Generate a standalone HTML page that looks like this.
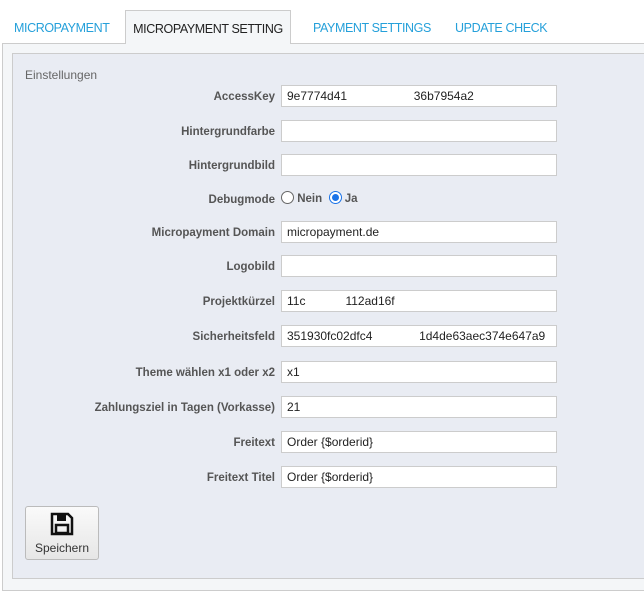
<!DOCTYPE html>
<html><head><style>
body{margin:0;width:644px;height:593px;background:#fff;font-family:"Liberation Sans",sans-serif;position:relative;overflow:hidden}
.tab{position:absolute;top:10px;height:33px;line-height:36px;font-size:12.5px;letter-spacing:-0.4px;color:#25a0da;white-space:nowrap}
.act{left:125px;width:166px;border:1px solid #ccc;border-bottom:none;background:#f4f6f8;color:#222;text-align:center;box-sizing:border-box;height:34px}
.outer{position:absolute;left:2px;top:43px;width:660px;height:546px;border:1px solid #ccc;background:#f4f6f8}
.inner{position:absolute;left:12px;top:53px;width:660px;height:524px;border:1px solid #ccc;background:#e9ecf3}
.ttl{position:absolute;left:25px;top:68px;font-size:12px;color:#666}
.lab{position:absolute;right:369px;font-size:11.5px;font-weight:bold;color:#555;text-align:right;white-space:nowrap}
.inp{position:absolute;left:281px;width:276px;height:22px;box-sizing:border-box;border:1px solid #ccc;background:#fff;font-size:12px;color:#222;line-height:20px;padding-left:5px;white-space:pre}
.btn{position:absolute;left:25px;top:506px;width:74px;height:54px;box-sizing:border-box;border:1px solid #bbb;border-radius:3px;background:linear-gradient(#fafafa,#e6e6e6);text-align:center;font-size:12px;color:#333}
</style></head><body>
<div class="outer"></div>
<div class="tab" style="left:14px">MICROPAYMENT</div>
<div class="tab act">MICROPAYMENT SETTING</div>
<div class="tab" style="left:313px">PAYMENT SETTINGS</div>
<div class="tab" style="left:455px">UPDATE CHECK</div>
<div class="inner"></div>
<div class="ttl">Einstellungen</div>

<div class="lab" style="top:91px">AccessKey</div><div class="inp" style="top:85px">9e7774d41                    36b7954a2</div>
<div class="lab" style="top:126px">Hintergrundfarbe</div><div class="inp" style="top:120px"></div>
<div class="lab" style="top:160px">Hintergrundbild</div><div class="inp" style="top:154px"></div>
<div class="lab" style="top:194px">Debugmode</div>
<div style="position:absolute;left:281px;top:191px;font-size:11.5px;font-weight:bold;color:#555;line-height:14px">
<span style="display:inline-block;width:11px;height:11px;border:1px solid #666;border-radius:50%;vertical-align:-2px;background:#fff"></span> Nein&nbsp;
<span style="display:inline-block;width:11px;height:11px;border:1px solid #1a73e8;border-radius:50%;vertical-align:-2px;background:#fff;position:relative"><span style="position:absolute;left:2px;top:2px;width:7px;height:7px;border-radius:50%;background:#1a73e8"></span></span> Ja</div>
<div class="lab" style="top:227px">Micropayment Domain</div><div class="inp" style="top:221px">micropayment.de</div>
<div class="lab" style="top:261px">Logobild</div><div class="inp" style="top:255px"></div>
<div class="lab" style="top:296px">Projektkürzel</div><div class="inp" style="top:290px">11c            112ad16f</div>
<div class="lab" style="top:331px">Sicherheitsfeld</div><div class="inp" style="top:325px">351930fc02dfc4              1d4de63aec374e647a9</div>
<div class="lab" style="top:367px">Theme wählen x1 oder x2</div><div class="inp" style="top:361px">x1</div>
<div class="lab" style="top:402px">Zahlungsziel in Tagen (Vorkasse)</div><div class="inp" style="top:396px">21</div>
<div class="lab" style="top:437px">Freitext</div><div class="inp" style="top:431px">Order {$orderid}</div>
<div class="lab" style="top:472px">Freitext Titel</div><div class="inp" style="top:466px">Order {$orderid}</div>

<div class="btn">
<svg width="24" height="24" viewBox="0 0 24 24" style="margin-top:5px"><path d="M2 2h16l4 4v16H2z" fill="none" stroke="#111" stroke-width="2.5"/><rect x="7" y="3" width="9" height="6" fill="#111"/><rect x="6" y="13" width="12" height="8" fill="none" stroke="#111" stroke-width="2.5"/></svg>
<div style="margin-top:2px">Speichern</div></div>
</body></html>
